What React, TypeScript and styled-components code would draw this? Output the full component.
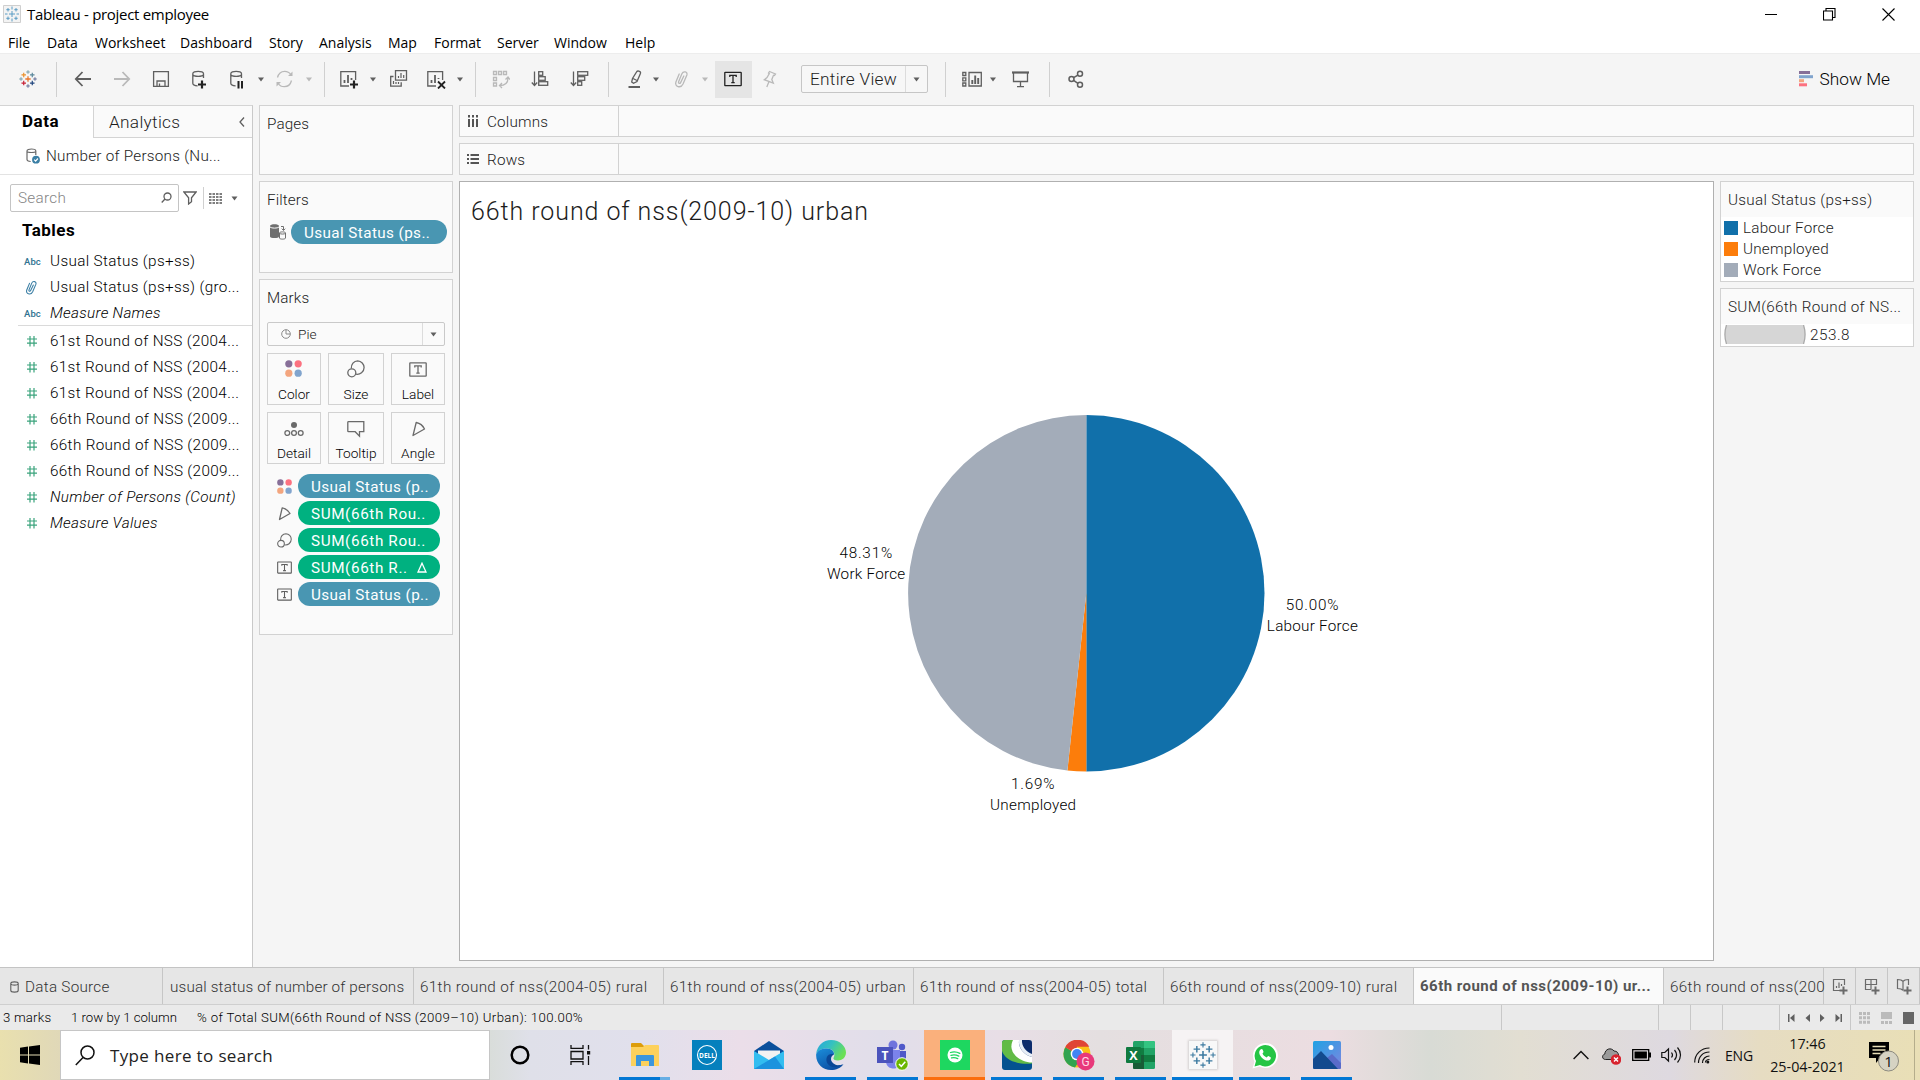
import React from "react";
import styled, { createGlobalStyle } from "styled-components";

const ui = "Roboto, 'Open Sans', 'Liberation Sans', sans-serif";
const win = "'Open Sans', 'Noto Sans', 'Liberation Sans', sans-serif";

const Global = createGlobalStyle`
  * { box-sizing: border-box; }
  body { margin: 0; background: #f5f5f5; overflow: hidden; }
  svg { display: block; flex: none; }
`;

const Screen = styled.div`
  width: 1920px;
  height: 1080px;
  display: flex;
  flex-direction: column;
  background: #f5f5f5;
  font-family: ${ui};
  font-size: 15.25px;
  font-weight: 300;
  color: #1c1c1c;
  white-space: nowrap;
`;

/* ---------- window chrome ---------- */
const TitleBar = styled.header`
  height: 28px;
  display: flex;
  align-items: center;
  background: #fff;
  padding-left: 3px;
`;
const WindowTitle = styled.span`
  margin-left: 6px;
  font: 400 15px ${win};
  letter-spacing: -0.3px;
  color: #000;
`;
const WindowButtons = styled.div`
  margin-left: auto;
  display: flex;
  gap: 46px;
  padding-right: 25px;
`;
const MenuBar = styled.nav`
  height: 26px;
  display: flex;
  align-items: center;
  background: #fff;
  border-bottom: 1px solid #ededed;
  padding-top: 3px;
`;
const MenuItem = styled.span<{ $w: number }>`
  width: ${(p) => p.$w}px;
  font: 400 14px ${win};
  color: #000;
`;

/* ---------- toolbar ---------- */
const Toolbar = styled.div`
  height: 51px;
  display: flex;
  align-items: center;
  padding-bottom: 1px;
`;
const Tool = styled.div<{ $gap: number }>`
  margin-left: ${(p) => p.$gap}px;
`;
const Separator = styled.div<{ $gap: number }>`
  width: 1px;
  height: 35px;
  margin-left: ${(p) => p.$gap}px;
  background: #d0d0d0;
`;
const ActiveTool = styled(Tool)`
  width: 37px;
  height: 37px;
  display: flex;
  align-items: center;
  padding-left: 9px;
  background: #e5e5e5;
`;
const ViewSelect = styled.div`
  width: 127px;
  height: 28px;
  margin-left: 24px;
  display: flex;
  align-items: center;
  border: 1px solid #c6c6c6;
  border-radius: 2px;
  background: #f7f7f7;
  font-size: 17.25px;
  letter-spacing: 0.28px;
  padding-left: 8px;
`;
const SelectArrow = styled.div<{ $w: number }>`
  width: ${(p) => p.$w}px;
  height: 100%;
  margin-left: auto;
  display: flex;
  align-items: center;
  justify-content: center;
  border-left: 1px solid #dcdcdc;
`;
const ShowMe = styled.div`
  margin-left: auto;
  padding-right: 30px;
  display: flex;
  align-items: center;
  gap: 7px;
  font-size: 17.25px;
  color: #000;
`;

/* ---------- workspace ---------- */
const Workspace = styled.div`
  height: 862px;
  display: flex;
`;
const DataPane = styled.aside`
  width: 253px;
  display: flex;
  flex-direction: column;
  background: #fff;
  border-right: 1px solid #c9c9c9;
  border-top: 1px solid #d4d4d4;
`;
const PaneTabs = styled.div`
  height: 32px;
  display: flex;
`;
const DataTab = styled.div`
  width: 93px;
  padding-left: 22px;
  line-height: 31px;
  font-size: 17px;
  font-weight: 700;
  letter-spacing: 0.5px;
  color: #000;
`;
const AnalyticsTab = styled.div`
  flex: 1;
  display: flex;
  align-items: center;
  justify-content: space-between;
  padding: 0 7px 0 15px;
  background: #fafafa;
  border-left: 1px solid #d4d4d4;
  border-bottom: 1px solid #d4d4d4;
  font-size: 17.25px;
  letter-spacing: 0.3px;
`;
const SourceRow = styled.div`
  height: 37px;
  display: flex;
  align-items: center;
  gap: 6px;
  padding-left: 26px;
  border-bottom: 1px solid #e3e3e3;
  letter-spacing: 0.25px;
`;
const SearchRow = styled.div`
  display: flex;
  align-items: center;
  padding: 9px 0 0 10px;
`;
const SearchBox = styled.div`
  width: 169px;
  height: 28px;
  display: flex;
  align-items: center;
  justify-content: space-between;
  padding: 0 6px 0 7px;
  border: 1px solid #c4c4c4;
  border-radius: 2px;
  color: #858585;
  letter-spacing: 0.3px;
`;
const SearchTools = styled.div`
  height: 22px;
  display: flex;
  align-items: center;
  padding-left: 4px;
`;
const SearchSplit = styled.div`
  width: 1px;
  height: 22px;
  margin: 0 5px 0 6px;
  background: #d0d0d0;
`;
const TablesHeading = styled.div`
  height: 36px;
  padding-left: 22px;
  line-height: 37px;
  font-size: 17px;
  font-weight: 700;
  letter-spacing: 0.45px;
  color: #000;
`;
const FieldGroup = styled.div<{ $ruled?: boolean }>`
  margin-left: 18px;
  padding: ${(p) => (p.$ruled ? "0" : "2px 0 0")};
  height: ${(p) => (p.$ruled ? "78px" : "auto")};
  border-bottom: ${(p) => (p.$ruled ? "1px solid #dadada" : "none")};
`;
const Field = styled.div<{ $italic?: boolean }>`
  height: 26px;
  display: flex;
  align-items: center;
  font-style: ${(p) => (p.$italic ? "italic" : "normal")};
  letter-spacing: ${(p) => (p.$italic ? 0.3 : 0.35)}px;
  color: #000;
`;
const FieldIcon = styled.span<{ $pad?: number }>`
  width: 32px;
  padding-left: ${(p) => p.$pad ?? 6}px;
  display: flex;
  font: 500 9.5px ${ui};
  letter-spacing: 0.1px;
  color: #2f7391;
`;

/* ---------- cards ---------- */
const CardColumn = styled.div`
  width: 194px;
  margin-left: 6px;
  display: flex;
  flex-direction: column;
  gap: 6px;
`;
const Card = styled.section<{ $h: number }>`
  height: ${(p) => p.$h}px;
  padding: 0 7px;
  background: #fafafa;
  border: 1px solid #d2d2d2;
`;
const CardTitle = styled.div`
  height: 36px;
  line-height: 36px;
  letter-spacing: 0.1px;
`;
const FilterRow = styled.div`
  display: flex;
  align-items: center;
  gap: 4px;
  padding: 2px 0 0 3px;
`;
const Pill = styled.div<{ $w: number; $measure?: boolean }>`
  width: ${(p) => p.$w}px;
  height: 24px;
  flex: none;
  display: flex;
  align-items: center;
  padding: 1px 13px 0;
  justify-content: space-between;
  border-radius: 12px;
  background: ${(p) => (p.$measure ? "#00b180" : "#4996b2")};
  color: #fff;
  font-size: 15.25px;
  font-weight: 400;
  letter-spacing: ${(p) => (p.$measure ? 0.62 : 0.4)}px;
`;
const MarkSelect = styled.div`
  height: 24px;
  width: 178px;
  margin-top: 6px;
  display: flex;
  align-items: center;
  padding-left: 13px;
  gap: 7px;
  border: 1px solid #c9c9c9;
  border-radius: 2px;
  font-size: 13.7px;
`;
const MarkGrid = styled.div`
  display: grid;
  grid-template-columns: 54px 56px 54px;
  grid-auto-rows: 52px;
  gap: 7px;
  margin-top: 7px;
`;
const MarkButton = styled.div`
  display: flex;
  flex-direction: column;
  align-items: center;
  justify-content: space-between;
  padding: 6px 0 1px;
  border: 1px solid #d2d2d2;
  font-size: 13.7px;
  line-height: 17px;
  color: #000;
`;
const Encodings = styled.div`
  display: flex;
  flex-direction: column;
  gap: 3px;
  padding: 10px 0 0 10px;
`;
const Encoding = styled.div`
  display: flex;
  align-items: center;
  gap: 6px;
`;

/* ---------- shelves, canvas ---------- */
const Main = styled.div`
  width: 1455px;
  margin-left: 6px;
  display: flex;
  flex-direction: column;
  gap: 6px;
`;
const Shelf = styled.div`
  height: 32px;
  display: flex;
  flex: none;
  background: #fafafa;
  border: 1px solid #d2d2d2;
`;
const ShelfLabel = styled.div`
  width: 159px;
  display: flex;
  align-items: center;
  gap: 8px;
  padding: 1px 0 0 7px;
  border-right: 1px solid #d2d2d2;
  letter-spacing: 0.2px;
`;
const ViewRow = styled.div`
  display: flex;
  gap: 6px;
`;
const Canvas = styled.div`
  width: 1255px;
  height: 780px;
  background: #fff;
  border: 1px solid #b0b0b0;
`;
const SheetTitle = styled.div`
  height: 60px;
  padding-left: 11px;
  line-height: 60px;
  font-size: 25px;
  letter-spacing: 0.92px;
`;
const Legends = styled.div`
  width: 194px;
  display: flex;
  flex-direction: column;
  gap: 6px;
`;
const Legend = styled.div<{ $h: number }>`
  height: ${(p) => p.$h}px;
  background: #fff;
  border: 1px solid #d2d2d2;
`;
const LegendTitle = styled.div`
  height: 35px;
  padding-left: 7px;
  line-height: 36px;
  background: #fafafa;
  letter-spacing: 0.3px;
`;
const LegendItem = styled.div`
  height: 21px;
  display: flex;
  align-items: center;
  gap: 5px;
  padding-left: 3px;
  letter-spacing: 0.22px;
`;
const Swatch = styled.span<{ $c: string }>`
  width: 14px;
  height: 14px;
  background: ${(p) => p.$c};
`;
const SizeItem = styled(LegendItem)`
  gap: 4px;
  letter-spacing: 0.5px;
`;

/* ---------- sheet tabs and status ---------- */
const SheetBar = styled.div`
  height: 38px;
  display: flex;
  flex: none;
  border-top: 1px solid #c4c4c4;
  border-bottom: 1px solid #cfcfcf;
  background: #e6e6e6;
`;
const SheetTab = styled.div<{ $w: number; $on?: boolean; $ls?: number }>`
  width: ${(p) => p.$w}px;
  flex: none;
  display: flex;
  align-items: center;
  gap: 6px;
  padding: ${(p) => (p.$on ? "0 0 1px 6px" : "1px 0 0 6px")};
  border-right: 1px solid #c6c6c6;
  background: ${(p) => (p.$on ? "#fafafa" : "transparent")};
  font-weight: ${(p) => (p.$on ? 700 : 300)};
  font-size: ${(p) => (p.$on ? 15 : 15.25)}px;
  letter-spacing: ${(p) => p.$ls ?? 0.35}px;
  color: ${(p) => (p.$on ? "#555" : "#333")};
`;
const SourceTab = styled(SheetTab)`
  padding-left: 10px;
`;
const FirstTab = styled(SheetTab)`
  padding-left: 7px;
`;
const NewButton = styled.div`
  width: 32px;
  display: flex;
  align-items: center;
  justify-content: center;
  border-right: 1px solid #c6c6c6;
`;
const StatusBar = styled.div`
  height: 25px;
  display: flex;
  flex: none;
  background: #eaeaea;
  color: #000;
  line-height: 25px;
`;
const StatusText = styled.span<{ $w: number; $ls: number }>`
  width: ${(p) => p.$w}px;
  font-size: 13.2px;
  letter-spacing: ${(p) => p.$ls}px;
`;
const StatusCell = styled.div<{ $w: number; $gap?: number; $pad?: number }>`
  width: ${(p) => p.$w}px;
  display: flex;
  align-items: center;
  gap: ${(p) => p.$gap ?? 0}px;
  padding-left: ${(p) => p.$pad ?? 0}px;
  border-left: 1px solid #c8c8c8;
`;

/* ---------- taskbar ---------- */
const Taskbar = styled.footer`
  height: 50px;
  flex: none;
  display: flex;
  background: linear-gradient(
    90deg,
    #e9e0ae 0, #e0d8b8 60px, #d9ddda 490px, #dfe0e9 530px, #e1e0ec 640px, #ebdee9 740px, #e1deea 880px,
    #e8dee6 1000px, #e4dfe0 1100px, #ecdde1 1330px, #d8dbd5 1430px, #e2ded2 1520px, #ded9e0 1670px,
    #e6dcc2 1760px, #e9dfb6 1920px
  );
`;
const Start = styled.div`
  width: 60px;
  display: flex;
  align-items: center;
  justify-content: center;
`;
const TaskSearch = styled.div`
  width: 430px;
  display: flex;
  align-items: center;
  gap: 15px;
  padding-left: 14px;
  background: #fff;
  border: 1px solid #c6c6c6;
  font: 400 17px ${win};
  letter-spacing: 0.35px;
  color: #222;
`;
const TaskIcon = styled.div<{ $w: number }>`
  width: ${(p) => p.$w}px;
  display: flex;
  align-items: center;
  justify-content: center;
`;
const TaskApp = styled.div<{ $bg?: string }>`
  width: 62px;
  padding: 0 0.5px;
  display: flex;
  flex-direction: column;
  align-items: center;
  background: ${(p) => p.$bg ?? "transparent"};
  background-clip: content-box;
`;
const AppGlyph = styled.div`
  height: 47px;
  display: flex;
  align-items: center;
  padding-top: 3px;
`;
const AppLine = styled.div<{ $c: string; $full?: boolean }>`
  width: ${(p) => (p.$full ? "100%" : "51px")};
  height: 3px;
  background: ${(p) => p.$c};
`;
const Tray = styled.div`
  margin-left: auto;
  display: flex;
  align-items: center;
`;
const Lang = styled.span`
  width: 45px;
  margin-left: 15px;
  font: 400 14px ${win};
  letter-spacing: -0.2px;
  color: #111;
`;
const Clock = styled.div`
  width: 75px;
  text-align: center;
  font: 400 14.3px/23px ${win};
  color: #111;
`;
const ShowDesktop = styled.div`
  width: 6px;
  height: 50px;
  border-left: 1px solid #b5ad8c;
`;

/* ---------- icons ---------- */
const G = "#5f5f5f";
const LIGHT = "#b9b9b9";
const Ico = ({ w, h = 20, c = G, s = 1.3, children }: { w: number; h?: number; c?: string; s?: number; children: React.ReactNode }) => (
  <svg width={w} height={h} viewBox={`0 0 ${w} ${h}`} fill="none" stroke={c} strokeWidth={s}>
    {children}
  </svg>
);
const Caret = ({ c = G, w = 6 }: { c?: string; w?: number }) => (
  <svg width={w} height="5" viewBox="0 0 6 5"><path d="M0 .5h6L3 4.5z" fill={c} /></svg>
);

const TableauMark = ({ size, mono }: { size: number; mono?: boolean }) => {
  const plus = (x: number, y: number, r: number, c: string, k: number) => (
    <path key={`${x}-${y}`} d={`M${x - r} ${y}h${2 * r}M${x} ${y - r}v${2 * r}`} stroke={mono ? "#3c7aa0" : c} strokeWidth={mono ? k * 0.85 : k} />
  );
  return (
    <svg width={size} height={size} viewBox="0 0 40 40" fill="none">
      {plus(20, 20, 6, "#e8762d", 2.8)}
      {plus(10.5, 11, 5, "#eb912c", 2.6)}
      {plus(29.5, 11, 5, "#59879b", 2.6)}
      {plus(10.5, 29, 5, "#c72035", 2.6)}
      {plus(29.5, 29, 5, "#1f457e", 2.6)}
      {plus(20, 4.5, 4, "#7099a6", 2)}
      {plus(20, 35.5, 4, "#5b6591", 2)}
      {plus(4.5, 20, 4, "#7099a6", 2)}
      {plus(35.5, 20, 4, "#5b6591", 2)}
    </svg>
  );
};

const Cylinder = ({ bold }: { bold: "plus" | "pause" }) => (
  <Ico w={18}>
    <path d="M12.500 9V4.800c0-1.600-2.400-2.500-5.300-2.500S1.800 3.200 1.800 4.800v9.500c0 1.400 1.800 2.400 4.800 2.500M1.800 5.600c.6 1.200 2.600 1.800 5.400 1.800s4.700-.6 5.300-1.800" />
    {bold === "plus" ? <path d="M7 15.500h8M11 11.500v8" stroke="#222" strokeWidth="2.200" /> : <path d="M9.500 12v7.500M13 12v7.500" stroke="#222" strokeWidth="2" />}
  </Ico>
);
const Clip = ({ c, w = 14, h = 20 }: { c: string; w?: number; h?: number }) => (
  <svg width={w} height={h} viewBox="0 0 14 18" fill="none" stroke={c} strokeWidth="1.300" strokeLinecap="round">
    <path d="M9.800 6L6.600 12.600c-.7 1.500-2.600.8-2-.8L7.900 3.800C9.300.6 13.900 1.600 12.900 5L9 14c-2.200 4.700-8.700 2.700-7.100-2L5.200 4" />
  </svg>
);
const Sort = ({ w }: { w: number[] }) => (
  <Ico w={19}>
    <path d="M3.500 2.500v14M.8 13.500l2.700 3 2.700-3" />
    {w.map((n, i) => <rect key={i} x="7.700" y={2.7 + i * 5} width={n} height="3.600" />)}
  </Ico>
);
const TBox = ({ w = 18, h = 15, c = G }: { w?: number; h?: number; c?: string }) => (
  <svg width={w} height={h} viewBox="0 0 18 15" fill="none" stroke={c} strokeWidth="1.300">
    <rect x=".8" y=".8" width="16.400" height="13.400" rx=".5" />
    <path d="M5.800 5.500V3.900h6.400v1.600M9 4v7.200M7.300 11.200h3.400" />
  </svg>
);
const Dots = ({ size = 16 }: { size?: number }) => (
  <svg width={size} height={size} viewBox="0 0 16 16">
    <circle cx="3.600" cy="3.600" r="3.400" fill="#876f98" />
    <circle cx="12.400" cy="3.600" r="3.400" fill="#fc7180" />
    <circle cx="3.600" cy="12.400" r="3.400" fill="#f3a57e" />
    <circle cx="12.400" cy="12.400" r="3.400" fill="#81a4cd" />
  </svg>
);
const SizeIcon = ({ size = 18 }: { size?: number }) => (
  <svg width={size} height={size} viewBox="0 0 18 18" fill="none" stroke="#6a6a6a" strokeWidth="1.300">
    <path d="M4.300 8.500C4 4.500 6.800.9 10.700.9a6.700 6.700 0 0 1 6.400 6.700c0 4.400-4.100 7.400-8.200 6.600" />
    <circle cx="4.800" cy="12.800" r="4" />
  </svg>
);
const AngleIcon = ({ size = 15 }: { size?: number }) => (
  <svg width={size} height={size} viewBox="0 0 15 15" fill="none" stroke="#6a6a6a" strokeWidth="1.300" strokeLinejoin="round">
    <path d="M5.200 1.900L2.500 13.500l10.500-6C11.500 4.800 8.700 2.700 5.200 1.900z" />
  </svg>
);
const Hash = () => (
  <svg width="12" height="12" viewBox="0 0 12 12" stroke="#3aa37c" strokeWidth="1.200">
    <path d="M1 4h10M1 8.200h10M4 1v10.500M8 1v10.500" />
  </svg>
);
const NewSheet = ({ d }: { d: string }) => (
  <svg width="18" height="18" viewBox="0 0 18 18" fill="none" stroke="#6a6a6a" strokeWidth="1.200">
    <path d={d} />
    <path d="M8.500 13.500h8M12.500 9.500v8" strokeWidth="2" />
  </svg>
);

/* ---------- data ---------- */
const menu: [string, number][] = [
  ["File", 39], ["Data", 48], ["Worksheet", 85], ["Dashboard", 89], ["Story", 50], ["Analysis", 69],
  ["Map", 46], ["Format", 63], ["Server", 57], ["Window", 71], ["Help", 40],
];
const measures = [
  "61st Round of NSS (2004...", "61st Round of NSS (2004...", "61st Round of NSS (2004...",
  "66th Round of NSS (2009...", "66th Round of NSS (2009...", "66th Round of NSS (2009...",
];
const slices = [
  { name: "Labour Force", pct: 50.0, color: "#1170aa", x: 1312.5, y: 609.5 },
  { name: "Unemployed", pct: 1.69, color: "#fc7d0b", x: 1033.2, y: 788.5 },
  { name: "Work Force", pct: 48.31, color: "#a3acb9", x: 866.2, y: 557.5 },
];

const PieChart = () => {
  const cx = 1086.3, cy = 593.3, r = 178.2;
  let at = 0;
  return (
    <svg width="1253" height="718" viewBox="460 242 1253 718" fontFamily={ui} fontSize="15.250" fontWeight="300" textAnchor="middle">
      {slices.map((s) => {
        const a = at * 2 * Math.PI;
        at += s.pct / 100;
        const b = at * 2 * Math.PI;
        return (
          <path
            key={s.name}
            fill={s.color}
            d={`M${cx} ${cy}L${cx + r * Math.sin(a)} ${cy - r * Math.cos(a)}A${r} ${r} 0 0 1 ${cx + r * Math.sin(b)} ${cy - r * Math.cos(b)}z`}
          />
        );
      })}
      {slices.map((s) => (
        <g key={s.name} fill="#000">
          <text x={s.x} y={s.y} letterSpacing=".8">{s.pct.toFixed(2)}%</text>
          <text x={s.x} y={s.y + 21.3} letterSpacing=".26">{s.name}</text>
        </g>
      ))}
    </svg>
  );
};

const Explorer = () => (
  <svg width="28" height="24" viewBox="0 0 28 24">
    <path d="M0 1a1 1 0 0 1 1-1h9l3 3v3H0z" fill="#dd9d0a" />
    <path d="M0 4h12l2-2h13a1 1 0 0 1 1 1v20H0z" fill="#fdd15c" />
    <path d="M5 23V13a1 1 0 0 1 1-1h16a1 1 0 0 1 1 1v10h-5v-5h-8v5z" fill="#3c96dc" />
  </svg>
);
const Dell = () => (
  <svg width="30" height="30" viewBox="0 0 30 30">
    <path fill="#0580bd" d="M0 0h30v30H0z" />
    <circle cx="15" cy="15" r="9.500" fill="none" stroke="#fff" strokeWidth="1.100" />
    <text x="15" y="17.500" fill="#fff" fontFamily={win} fontWeight="700" fontSize="6.500" textAnchor="middle">DELL</text>
  </svg>
);
const Mail = () => (
  <svg width="30" height="28" viewBox="0 0 30 28">
    <path d="M0 10L15 0l15 10v4H0z" fill="#0a4f9c" />
    <path d="M4 9.500h22v10H4z" fill="#f2f2f2" />
    <path d="M0 10l15 9 15-9v18H0z" fill="#33bdf0" />
    <path d="M0 28l21-12.500L30 28z" fill="#1c93de" />
  </svg>
);
const Edge = () => (
  <svg width="30" height="30" viewBox="0 0 30 30">
    <defs>
      <linearGradient id="edgeTop" x1="0" y1="0" x2="1" y2=".5"><stop offset="0" stopColor="#27a5de" /><stop offset=".5" stopColor="#35c1c0" /><stop offset="1" stopColor="#6be056" /></linearGradient>
      <linearGradient id="edgeLow" x1="0" y1="0" x2=".6" y2="1"><stop offset="0" stopColor="#1b8fdb" /><stop offset="1" stopColor="#0c4fa3" /></linearGradient>
    </defs>
    <path d="M.2 14C1 6 7 0 15 0c9 0 15 6.500 15 12.500 0 5-4 8-8 8-3.500 0-5-1.500-4.500-2.500 2-3 1-9-6-9.500C6 8 2 10.500.2 14z" fill="url(#edgeTop)" />
    <path d="M.2 14C2 10 6.500 8.300 11 8.500c5 .2 7.500 3.500 7 6-5-1-7.500 5-3 9 3.500 3 9 2.500 12.500.5C25 28 20 30 15 30 6.500 30-.6 23 .2 14z" fill="url(#edgeLow)" />
    <path d="M18 14.500c-6-2-9.500 4-6.500 9 2.500 4 9 5.500 15 1-6 2.500-11.500-1.500-11.500-5.500 0-2 1.200-3.700 3-4.500z" fill="#0a4796" />
  </svg>
);
const Teams = () => (
  <svg width="32" height="31" viewBox="0 0 32 31">
    <circle cx="16" cy="5" r="4.500" fill="#6f74dd" />
    <circle cx="25" cy="7" r="3.200" fill="#5059c9" />
    <path d="M20 11h9v10c0 4-5 6-9 4z" fill="#5059c9" />
    <path d="M9 10h14v13c0 7-13 8-14-1z" fill="#7b83eb" />
    <path fill="#4b53bc" d="M0 7h16v16H0z" />
    <text x="8" y="19.500" fill="#fff" fontFamily={win} fontWeight="700" fontSize="12" textAnchor="middle">T</text>
    <circle cx="25" cy="24" r="6.300" fill="#6bb700" stroke="#fff" strokeWidth="1" />
    <path d="M22 24l2.300 2.300 4-4.500" fill="none" stroke="#fff" strokeWidth="1.500" />
  </svg>
);
const Spotify = () => (
  <svg width="30" height="30" viewBox="0 0 30 30">
    <path fill="#1ed760" d="M0 0h30v30H0z" />
    <circle cx="15" cy="15" r="7.500" fill="#fff" />
    <path d="M10.500 12.500c3-.9 6.500-.6 9.300.9M11 15.300c2.700-.7 5.500-.4 7.800.8M11.500 17.900c2.200-.5 4.200-.3 6.200.7" fill="none" stroke="#1ed760" strokeWidth="1.300" strokeLinecap="round" />
  </svg>
);
const Swoosh = () => (
  <svg width="30" height="30" viewBox="0 0 30 30">
    <defs><clipPath id="tile"><rect width="30" height="30" rx="3" /></clipPath></defs>
    <g clipPath="url(#tile)">
      <path d="M0 0h30v30H0z" fill="#04518f" />
      <path d="M0 0h16C9 8 12 19 30 22v1.500C15 25 3 20 0 11z" fill="#62bb46" />
      <path d="M11 0h19v22.500C17 22 5 12 11 0z" fill="#fff" />
      <path d="M17 0h13v17C22 15 16 8 17 0z" fill="#0c2c6c" />
      <path d="M17 0h3c-.5 6 4 12 10 14v3C22 15 16 8 17 0z" fill="#e8eef6" />
    </g>
  </svg>
);
const Chrome = () => (
  <svg width="32" height="31" viewBox="0 0 32 31">
    <circle cx="14" cy="14" r="13.500" fill="#fbc116" />
    <path d="M14 14L2.300 7.200A13.500 13.500 0 0 0 12 27.400L18 18z" fill="#32a350" />
    <path d="M14 14L2.300 7.200a13.500 13.500 0 0 1 24-.4H14z" fill="#e04435" />
    <circle cx="14" cy="14" r="6.300" fill="#fff" />
    <circle cx="14" cy="14" r="4.900" fill="#4285f4" />
    <circle cx="22.500" cy="21.500" r="9" fill="#e8397b" />
    <text x="22.500" y="26" fill="#ffd9e6" fontFamily={ui} fontWeight="400" fontSize="12" textAnchor="middle">G</text>
  </svg>
);
const Excel = () => (
  <svg width="29" height="28" viewBox="0 0 29 28">
    <rect x="7" width="22" height="28" rx="1.500" fill="#21a366" />
    <path d="M7 7h11v7H7z" fill="#107c41" />
    <path d="M18 0h9.500A1.500 1.500 0 0 1 29 1.500V7H18z" fill="#33c481" />
    <path d="M7 14h22v7H7z" fill="#107c41" />
    <path d="M7 14h11v14H8.500A1.500 1.500 0 0 1 7 26.500z" fill="#185c37" />
    <rect y="6" width="15" height="16" rx="1" fill="#0f7a3f" />
    <text x="7.500" y="18.800" fill="#fff" fontFamily={win} fontWeight="700" fontSize="12.500" textAnchor="middle">X</text>
  </svg>
);
const TableauTile = styled.div`
  width: 28px;
  height: 28px;
  display: flex;
  align-items: center;
  justify-content: center;
  background: #f8f8f8;
  box-shadow: 0 0 2px 1px #d4d0d0;
`;
const Whats = () => (
  <svg width="26" height="27" viewBox="0 0 26 27">
    <path d="M.5 26.500l2-7A12.500 12.500 0 1 1 7.500 24.500z" fill="#fff" />
    <path d="M2.500 24.500l1.500-5.500a10.700 10.700 0 1 1 4 4z" fill="#25c545" />
    <path d="M8.500 7.500c1-1 2-.6 2.300.5l.7 1.700c.2.700-1 1.600-1 1.900.7 1.700 2 2.900 4 3.800.6.200 1.200-1.400 1.900-1.300l2.200 1.100c.7.500.1 2.200-1 2.900-2 1.200-5 .2-7.200-1.900-2.800-2.600-4.500-6.400-1.900-8.700z" fill="#fff" />
  </svg>
);
const Photos = () => (
  <svg width="28" height="28" viewBox="0 0 28 28">
    <defs>
      <linearGradient id="sky" x1="0" y1="0" x2="1" y2="1"><stop offset="0" stopColor="#1fa2e4" /><stop offset="1" stopColor="#7f86e0" /></linearGradient>
    </defs>
    <rect width="28" height="28" rx="1.500" fill="url(#sky)" />
    <path d="M14 17l5-4 9 9v4.500a1.500 1.500 0 0 1-1.500 1.500H14z" fill="#5a6bc9" />
    <path d="M0 18l8-8 17 18H1.500A1.500 1.500 0 0 1 0 26.500z" fill="#134a8e" />
    <circle cx="18" cy="6.500" r="2.500" fill="#fff" />
  </svg>
);

const apps: { g: React.ReactNode; line?: string; bg?: string; full?: boolean }[] = [
  { g: <Explorer />, line: "linear-gradient(90deg,#0277d4 41px,#66aee4 41px)" },
  { g: <Dell /> },
  { g: <Mail /> },
  { g: <Edge />, line: "#0277d4" },
  { g: <Teams />, line: "#0277d4" },
  { g: <Spotify />, line: "#fb6d0d", bg: "#fab07c", full: true },
  { g: <Swoosh />, line: "#0277d4" },
  { g: <Chrome />, line: "#0277d4" },
  { g: <Excel />, line: "#0277d4" },
  { g: <TableauTile><TableauMark size={26} mono /></TableauTile>, line: "#0277d4", bg: "#f6f3f4", full: true },
  { g: <Whats />, line: "#0277d4" },
  { g: <Photos />, line: "#0277d4" },
];

const sep = (g: number) => <Separator $gap={g} />;

export default function App() {
  return (
    <Screen>
      <Global />
      <TitleBar>
        <svg width="18" height="18" viewBox="0 0 18 18">
          <path d="M.5.5h17v17H.5z" fill="#f3f3f3" stroke="#cfcfcf" />
          <path d="M9 6v6M6 9h6M5 3v3.500M3.300 4.700h3.400M13 3v3.500M11.300 4.700h3.400M5 11.500V15M3.300 13.300h3.400M13 11.500V15M11.300 13.300h3.400M9 1.500v3M9 13.500v3M2 9h2.500M13.500 9H16" stroke="#5a9cc4" strokeWidth="1" />
        </svg>
        <WindowTitle>Tableau - project employee</WindowTitle>
        <WindowButtons>
          <Ico w={13} h={13} c="#000" s={1}><path d="M1 6.500h12" /></Ico>
          <Ico w={13} h={13} c="#000" s={1.1}><path d="M.5 3h9v9h-9zM3 3V.5h9v9H9.500" /></Ico>
          <Ico w={13} h={13} c="#000" s={1.1}><path d="M.5.5l12 12M12.500.5l-12 12" /></Ico>
        </WindowButtons>
      </TitleBar>
      <MenuBar>
        <MenuItem $w={8} />
        {menu.map(([t, w]) => <MenuItem key={t} $w={w}>{t}</MenuItem>)}
      </MenuBar>

      <Toolbar>
        <Tool $gap={19}><TableauMark size={18} /></Tool>
        {sep(19)}
        <Tool $gap={17}><Ico w={18} s={1.8}><path d="M17 10H2M8.500 3L1.800 10l6.700 7" /></Ico></Tool>
        <Tool $gap={21}><Ico w={18} s={1.8} c={LIGHT}><path d="M1 10h15M9.500 3l6.700 7-6.700 7" /></Ico></Tool>
        <Tool $gap={21}><Ico w={18}><path d="M1.600 2.600h14.800v14.800H1.600zM5 17v-5h8v5M7.500 17v-2.500" /></Ico></Tool>
        <Tool $gap={21}><Cylinder bold="plus" /></Tool>
        <Tool $gap={20}><Cylinder bold="pause" /></Tool>
        <Tool $gap={11}><Caret /></Tool>
        <Tool $gap={11}>
          <Ico w={19} c={LIGHT}>
            <path d="M2.500 8.500C3.500 4.500 6.500 2.300 9.700 2.300c2.600 0 4.800 1.200 6 3.200M16.500 11.500c-1 4-4 6.200-7.200 6.200-2.600 0-4.800-1.200-6-3.200" />
            <path d="M17.500 2.500v4.500H13zM1.500 17.500V13H6z" fill={LIGHT} stroke="none" />
          </Ico>
        </Tool>
        <Tool $gap={12}><Caret c={LIGHT} /></Tool>
        {sep(12)}
        <Tool $gap={14}>
          <Ico w={20}><path d="M10 17H1.800V2.600h14.800V11" /><path d="M5.500 14v-3M9 14V6M12.500 11V9" strokeWidth="1.800" /><path d="M11 15.500h8M15 11.500v8" stroke="#222" strokeWidth="2.200" /></Ico>
        </Tool>
        <Tool $gap={11}><Caret /></Tool>
        <Tool $gap={13}>
          <Ico w={19}><path d="M6.500 1.600h11v9.500h-11zM4.500 7.500H1.700v9.700h10.500v-4" /><path d="M9.500 9V7M12 9V4M14.700 9V6M4.500 15v-3M7 15v-2M9.500 15v-2" strokeWidth="1.200" /></Ico>
        </Tool>
        <Tool $gap={18}>
          <Ico w={20}><path d="M10 17H1.800V2.600h14.800V11" /><path d="M5.500 14v-3M9 14V6M12.500 10V9" strokeWidth="1.800" /><path d="M12 12.500l7 7M19 12.500l-7 7" stroke="#222" strokeWidth="1.800" /></Ico>
        </Tool>
        <Tool $gap={11}><Caret /></Tool>
        {sep(12)}
        <Tool $gap={16}>
          <Ico w={18} c={LIGHT}><path d="M1.500 2.500h3v3h-3zM6.500 2.500h3v3h-3zM11.500 2.500h3v3h-3zM1.500 8.500h3v3h-3zM1.500 14h3v3h-3zM16 9c0 5-3 7.500-8.500 7.500M13.500 10.500L16 8l2 2.500M10 14l-2.500 2.500L10 19" /></Ico>
        </Tool>
        <Tool $gap={21}><Sort w={[4, 6.5, 9]} /></Tool>
        <Tool $gap={20}><Sort w={[10, 7, 4]} /></Tool>
        {sep(19)}
        <Tool $gap={19}>
          <Ico w={14}><path d="M8.500 3c.5-1.800 4.500-1 4 1.200L9 12.500l-3.500 1.800-1.800-1.400.8-3.400zM5 9.500l4 2" /><path d="M.5 18h11.500" strokeWidth="2" /></Ico>
        </Tool>
        <Tool $gap={11}><Caret /></Tool>
        <Tool $gap={15}><Clip c={LIGHT} /></Tool>
        <Tool $gap={14}><Caret c={LIGHT} /></Tool>
        <ActiveTool $gap={7}><TBox w={18} h={16} c="#222" /></ActiveTool>
        <Tool $gap={11}>
          <Ico w={14} c={LIGHT}><path d="M6.500 2.500l6 2.500-1 1.500-1-.3-1.700 4.300 1.500 3.500-9-3.300L4 8.500 6.300 4.700l-.8-.6zM6 12.500L3.800 18" /></Ico>
        </Tool>
        <ViewSelect>Entire View<SelectArrow $w={22}><Caret w={7} /></SelectArrow></ViewSelect>
        {sep(17)}
        <Tool $gap={16}>
          <Ico w={20}><path d="M.8 3.500h3v3h-3zM.8 8.800h3v3h-3zM.8 14h3v3h-3zM7 3.500h12.300V17H7z" /><path d="M10.300 15v-4M13.200 15V6.500M16.200 15V9" strokeWidth="1.900" /></Ico>
        </Tool>
        <Tool $gap={8}><Caret /></Tool>
        <Tool $gap={15}><Ico w={19}><path d="M2.500 4v8.500h14V4M9.500 12.500v5M6 17.700h7" /><path d="M1 3.500h17" strokeWidth="2.200" /></Ico></Tool>
        {sep(19)}
        <Tool $gap={18}><Ico w={16} s={1.5}><circle cx="3.500" cy="10" r="2.500" /><circle cx="12" cy="4.700" r="2.500" /><circle cx="12" cy="15.800" r="2.500" /><path d="M5.600 8.700l4.300-2.600M5.600 11.300l4.300 3" /></Ico></Tool>
        <ShowMe>
          <svg width="14" height="16" viewBox="0 0 14 16">
            <path fill="#876f98" d="M0 0h11v3H0z" /><path fill="#81a4cd" d="M0 4.200h14v3H0z" /><path fill="#f3a57e" d="M0 8.200h5v3H0z" /><path fill="#fc7180" d="M0 12.300h8v3H0z" />
          </svg>
          Show Me
        </ShowMe>
      </Toolbar>

      <Workspace>
        <DataPane>
          <PaneTabs>
            <DataTab>Data</DataTab>
            <AnalyticsTab>Analytics<Ico w={6} h={10}><path d="M5 .5L1 5l4 4.500" /></Ico></AnalyticsTab>
          </PaneTabs>
          <SourceRow>
            <svg width="14" height="16" viewBox="0 0 14 16" fill="none" stroke="#6a6a6a" strokeWidth="1.200">
              <path d="M9.800 7V3C9.800 1.700 7.900 1 5.500 1S1 1.700 1 3v8.500c0 1.200 1.300 1.900 3.700 2M1 3.500c.8 1.300 7.900 1.300 8.800 0" />
              <circle cx="10" cy="11.700" r="3.900" fill="#3b7fa5" stroke="none" /><path d="M8.200 11.700l1.400 1.400 2.300-2.600" stroke="#fff" />
            </svg>
            Number of Persons (Nu...
          </SourceRow>
          <SearchRow>
            <SearchBox>Search<Ico w={11} h={12}><circle cx="6.500" cy="4.500" r="3.500" /><path d="M4 7L.7 10.500" /></Ico></SearchBox>
            <SearchTools>
              <Ico w={14} h={14}><path d="M.9 1h12.200L8.500 6.800v4L5.600 13V6.800z" /></Ico>
              <SearchSplit />
              <svg width="13" height="11" viewBox="0 0 13 11"><path d="M0 1h13M0 4h13M0 7h13M0 10h13" stroke="#555" strokeWidth="1.500" strokeDasharray="2.500 1" /></svg>
              <Tool $gap={9}><Caret w={7} /></Tool>
            </SearchTools>
          </SearchRow>
          <TablesHeading>Tables</TablesHeading>
          <FieldGroup $ruled>
            <Field><FieldIcon>Abc</FieldIcon>Usual Status (ps+ss)</Field>
            <Field><FieldIcon $pad={7}><Clip c="#3b7fa5" w={12} h={15} /></FieldIcon>Usual Status (ps+ss) (gro...</Field>
            <Field $italic><FieldIcon>Abc</FieldIcon>Measure Names</Field>
          </FieldGroup>
          <FieldGroup>
            {measures.map((m, i) => <Field key={i}><FieldIcon $pad={8}><Hash /></FieldIcon>{m}</Field>)}
            <Field $italic><FieldIcon $pad={8}><Hash /></FieldIcon>Number of Persons (Count)</Field>
            <Field $italic><FieldIcon $pad={8}><Hash /></FieldIcon>Measure Values</Field>
          </FieldGroup>
        </DataPane>

        <CardColumn>
          <Card $h={70}><CardTitle>Pages</CardTitle></Card>
          <Card $h={92}>
            <CardTitle>Filters</CardTitle>
            <FilterRow>
              <svg width="17" height="16" viewBox="0 0 17 16">
                <path d="M0 2c0-2.500 9-2.500 9 0v10.500c0 2-9 2-9 0z" fill="#6f6f6f" /><path d="M0 3c1.500 1.500 7.500 1.500 9 0" stroke="#fafafa" fill="none" />
                <path d="M11 2.500h2.500V6M11.800 4.700l1.700 1.800 1.700-1.800" fill="none" stroke="#6f6f6f" />
                <path d="M9.500 9c0-1.500 6-1.500 6 0v5c0 1.500-6 1.500-6 0zM9.500 9.300c1 1 5 1 6 0" fill="#fafafa" stroke="#6f6f6f" />
              </svg>
              <Pill $w={156}>Usual Status (ps..</Pill>
            </FilterRow>
          </Card>
          <Card $h={356}>
            <CardTitle>Marks</CardTitle>
            <MarkSelect>
              <Ico w={10} h={10} c="#8a8a8a" s={1}><circle cx="5" cy="5" r="4.300" /><path d="M5 .7V5h4.300" /></Ico>
              Pie
              <SelectArrow $w={22}><Caret w={7} /></SelectArrow>
            </MarkSelect>
            <MarkGrid>
              <MarkButton><Tool $gap={-1}><Dots size={17} /></Tool>Color</MarkButton>
              <MarkButton><SizeIcon />Size</MarkButton>
              <MarkButton><TBox w={18} h={19} c="#6a6a6a" />Label</MarkButton>
              <MarkButton>
                <Ico w={20} h={18} c="#6a6a6a"><circle cx="10" cy="6" r="3" fill="#6a6a6a" stroke="none" /><circle cx="3.300" cy="14" r="2.400" /><circle cx="10" cy="14" r="2.400" /><circle cx="16.700" cy="14" r="2.400" /></Ico>
                Detail
              </MarkButton>
              <MarkButton><Ico w={18} h={20} c="#6a6a6a"><path d="M1.500 2.700h15.300v10h-4.300v4.500L8.200 12.700H1.500c-.4 0-.7-.3-.7-.7V3.400c0-.4.3-.7.7-.7z" /></Ico>Tooltip</MarkButton>
              <MarkButton><Ico w={15} h={18} c="#6a6a6a"><path d="M5.200 3.500L2 16.500l11.500-6.500C11.800 6.500 9 4.300 5.200 3.500z" strokeLinejoin="round" /></Ico>Angle</MarkButton>
            </MarkGrid>
            <Encodings>
              <Encoding><Dots size={15} /><Pill $w={142}>Usual Status (p..</Pill></Encoding>
              <Encoding><AngleIcon /><Pill $w={142} $measure>SUM(66th Rou..</Pill></Encoding>
              <Encoding><SizeIcon size={15} /><Pill $w={142} $measure>SUM(66th Rou..</Pill></Encoding>
              <Encoding><TBox w={15} h={13} /><Pill $w={142} $measure>SUM(66th R..<Ico w={10} h={11} c="#fff"><path d="M5 1.200L9 10H1z" /></Ico></Pill></Encoding>
              <Encoding><TBox w={15} h={13} /><Pill $w={142}>Usual Status (p..</Pill></Encoding>
            </Encodings>
          </Card>
        </CardColumn>

        <Main>
          <Shelf>
            <ShelfLabel><svg width="12" height="13" viewBox="0 0 12 13"><path d="M2 0v2.500M6 0v2.500M10 0v2.500M2 4v8M6 4v8M10 4v8" stroke="#555" strokeWidth="2" /></svg>Columns</ShelfLabel>
          </Shelf>
          <Shelf>
            <ShelfLabel><svg width="12" height="12" viewBox="0 0 12 12"><path d="M0 1h2M3.500 1H12M0 5h2M3.500 5H12M0 9h2M3.500 9H12" stroke="#555" strokeWidth="2" /></svg>Rows</ShelfLabel>
          </Shelf>
          <ViewRow>
            <Canvas>
              <SheetTitle>66th round of nss(2009-10) urban</SheetTitle>
              <PieChart />
            </Canvas>
            <Legends>
              <Legend $h={101}>
                <LegendTitle>Usual Status (ps+ss)</LegendTitle>
                {slices.map((s) => <LegendItem key={s.name}><Swatch $c={s.color} />{s.name}</LegendItem>)}
              </Legend>
              <Legend $h={59}>
                <LegendTitle>SUM(66th Round of NS...</LegendTitle>
                <SizeItem>
                  <svg width="82" height="19" viewBox="0 0 82 19"><path d="M2.500 0h77c2 6 2 13 0 19h-77C.5 13 .5 6 2.500 0z" fill="#d6d6d6" /><path d="M2.500 0C.5 6 .5 13 2.500 19M79.500 0c2 6 2 13 0 19" fill="none" stroke="#aaa" strokeWidth="1.300" /></svg>
                  253.8
                </SizeItem>
              </Legend>
            </Legends>
          </ViewRow>
        </Main>
      </Workspace>

      <SheetBar>
        <SourceTab $w={163} $ls={0.27}>
          <Ico w={9} h={12} s={1.1}><path d="M.8 2.500c0-2.200 7.400-2.200 7.400 0v7c0 2.200-7.400 2.200-7.400 0zM.8 3c1 1.500 6.400 1.500 7.400 0" /></Ico>
          Data Source
        </SourceTab>
        <FirstTab $w={251} $ls={0.15}>usual status of number of persons</FirstTab>
        <SheetTab $w={250}>61th round of nss(2004-05) rural</SheetTab>
        <SheetTab $w={250}>61th round of nss(2004-05) urban</SheetTab>
        <SheetTab $w={250}>61th round of nss(2004-05) total</SheetTab>
        <SheetTab $w={250}>66th round of nss(2009-10) rural</SheetTab>
        <SheetTab $w={250} $on $ls={0.47}>66th round of nss(2009-10) ur...</SheetTab>
        <SheetTab $w={160}>66th round of nss(200</SheetTab>
        <NewButton><NewSheet d="M9 13.500H2.500v-11h11V8M5.500 11V9M8 11V5.500M10.500 9V7" /></NewButton>
        <NewButton><NewSheet d="M8 12.500H2.500v-10h11V8M8 2.500v10M2.500 7.500h11" /></NewButton>
        <NewButton><NewSheet d="M8 13.500C7 12 5 11.500 2.500 11.500v-9C5 2.500 7 3 8 4.500c1-1.500 3-2 5.500-2V8M8 4.500v9" /></NewButton>
      </SheetBar>
      <StatusBar>
        <StatusText $w={3} $ls={0} />
        <StatusText $w={68} $ls={0.2}>3 marks</StatusText>
        <StatusText $w={126} $ls={0}>1 row by 1 column</StatusText>
        <StatusText $w={1304} $ls={0.38}>% of Total SUM(66th Round of NSS (2009–10) Urban): 100.00%</StatusText>
        <StatusCell $w={157} />
        <StatusCell $w={32} />
        <StatusCell $w={32} />
        <StatusCell $w={57} />
        <StatusCell $w={71} $pad={8} $gap={10}>
          <svg width="7" height="8" viewBox="0 0 7 8"><path d="M0 0h1.500v8H0zM6.500 0v8L2 4z" fill={G} /></svg>
          <svg width="5" height="8" viewBox="0 0 5 8"><path d="M5 0v8L.5 4z" fill={G} /></svg>
          <svg width="5" height="8" viewBox="0 0 5 8"><path d="M0 0v8l4.500-4z" fill={G} /></svg>
          <svg width="7" height="8" viewBox="0 0 7 8"><path d="M5.500 0H7v8H5.500zM.5 0v8L5 4z" fill={G} /></svg>
        </StatusCell>
        <StatusCell $w={70} $pad={8} $gap={11}>
          <svg width="11" height="12" viewBox="0 0 11 12"><path d="M0 1.500h11M0 5.800h11M0 10.200h11" stroke="#bbb" strokeWidth="3" strokeDasharray="3 1" /></svg>
          <svg width="11" height="12" viewBox="0 0 11 12"><path d="M0 0h11v7H0zM0 9h3v3H0zM4 9h3v3H4zM8 9h3v3H8z" fill="#bbb" /></svg>
          <svg width="11" height="12" viewBox="0 0 11 12"><path d="M0 0h11v12H0z" fill="#666" /></svg>
        </StatusCell>
      </StatusBar>

      <Taskbar>
        <Start>
          <svg width="20" height="20" viewBox="0 0 20 20"><path d="M0 2.800L8 1.600v8H0zM9 1.400L20 0v9.600H9zM0 10.400h8v8L0 17.200zM9 10.400h11V20L9 18.600z" fill="#000" /></svg>
        </Start>
        <TaskSearch>
          <Ico w={20} h={21} c="#111" s={1.5}><circle cx="12.500" cy="7.500" r="6.500" /><path d="M8 12.500L.8 20" /></Ico>
          Type here to search
        </TaskSearch>
        <TaskIcon $w={60}><Ico w={20} h={20} c="#000" s={2.5}><circle cx="10" cy="10" r="8.300" /></Ico></TaskIcon>
        <TaskIcon $w={60}>
          <Ico w={21} h={20} c="#111"><path d="M1 0v3.300h12V0M1 6.500h12v7.500H1zM1 20v-3.300h12V20M18.500 0v4.500M18.500 11v9" /><path d="M17 6h3.200v3.500H17z" fill="#111" stroke="none" /></Ico>
        </TaskIcon>
        <TaskIcon $w={3.5} />
        {apps.map((a, i) => (
          <TaskApp key={i} $bg={a.bg}>
            <AppGlyph>{a.g}</AppGlyph>
            {a.line && <AppLine $c={a.line} $full={a.full} />}
          </TaskApp>
        ))}
        <Tray>
          <Ico w={16} h={10} c="#111" s={1.4}><path d="M.6 9L8 1.400 15.400 9" /></Ico>
          <Tool $gap={12}>
            <svg width="20" height="19" viewBox="0 0 20 19">
              <path d="M4.500 13.500C1 13.500.5 9 3.800 8 4 3 10 1 13 5c3 0 4.500 2 4.500 4.500v4z" fill="#9a9a9a" stroke="#222" />
              <circle cx="15" cy="13.500" r="5.300" fill="#d8232e" /><path d="M13 11.500l4 4M17 11.500l-4 4" stroke="#fff" strokeWidth="1.400" />
            </svg>
          </Tool>
          <Tool $gap={11}><Ico w={19} h={12} c="#000"><path d="M.7.7h16v10.600h-16z" /><path d="M2.500 2.500h12.400v7H2.500zM17 3.500h2v5h-2z" fill="#000" stroke="none" /></Ico></Tool>
          <Tool $gap={10}><Ico w={21} h={18} c="#111" s={1.2}><path d="M.8 6.500h3L7.500 3v12L3.800 11.500h-3zM10.500 6.500c1.200 1.500 1.200 3.500 0 5M13.500 4c2.500 3 2.500 7 0 10M16.500 1.500c4 4.500 4 10.500 0 15" /></Ico></Tool>
          <Tool $gap={12}><Ico w={16} h={17} c="#111" s={1.2}><path d="M.7 15.500C.7 7 7 1 15.500 1M4.500 16C4.500 9.500 9 5 15.500 5M8.500 16c0-4 3-7 7-7" /><path d="M11.500 15.500c0-2 1.500-3 4-3" /><circle cx="13.800" cy="15" r="1.500" fill="#111" stroke="none" /></Ico></Tool>
          <Lang>ENG</Lang>
          <Clock>17:46<br />25-04-2021</Clock>
          <Tool $gap={24}>
            <svg width="31" height="34" viewBox="0 0 31 34">
              <path d="M0 4h20v16h-9l-4 5v-5H0z" fill="#000" /><path d="M3.500 8.500h13M3.500 12h13M3.500 15.500h8" stroke="#e8deb8" strokeWidth="1.300" />
              <circle cx="19.500" cy="23" r="10" fill="#d6d3c3" stroke="#8c8a80" /><text x="19.500" y="28.500" textAnchor="middle" fontFamily={win} fontWeight="400" fontSize="15" fill="#111">1</text>
            </svg>
          </Tool>
          <Tool $gap={14}><ShowDesktop /></Tool>
        </Tray>
      </Taskbar>
    </Screen>
  );
}
